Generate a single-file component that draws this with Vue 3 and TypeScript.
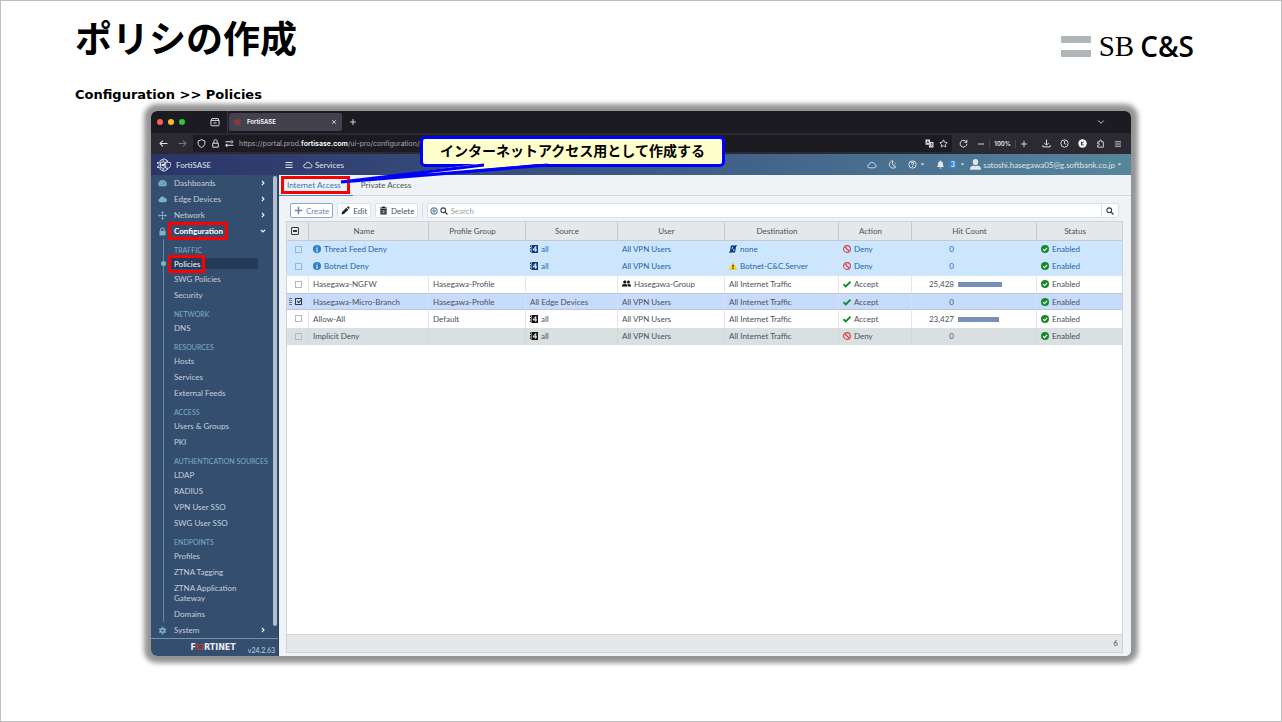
<script setup lang="ts">
import { ref } from 'vue'

const icons: Record<string, string> = {
  dash: '<path fill="currentColor" d="M8 2a7 7 0 0 0-6.300 10.600c.2.300.500.400.800.400h11c.300 0 .600-.100.800-.400A7 7 0 0 0 8 2z"/><path d="M7.800 10.500 11 5.500M3.500 9h1M5 5.500l.600.600M8 3.800v1M11.700 9h.8" stroke="#344e70" stroke-width="1.300" fill="none"/>',
  cloud: '<path fill="currentColor" d="M4 13a3.500 3.500 0 0 1-.6-6.900 4.500 4.500 0 0 1 8.500-.9A3.900 3.900 0 0 1 12 13z"/>',
  cloudLine: '<path fill="none" stroke="currentColor" stroke-width="1.400" d="M4 12.500a2.800 2.800 0 0 1-.3-5.600 4.300 4.300 0 0 1 8.300-.3A3 3 0 0 1 12 12.500z"/>',
  network: '<path fill="none" stroke="currentColor" stroke-width="1.700" d="M8 1v14M1 8h14M6 3l2-2 2 2M6 13l2 2 2-2M3 6 1 8l2 2M13 6l2 2-2 2"/>',
  lock: '<path fill="currentColor" d="M2.500 7h11v8h-11z"/><path fill="none" stroke="currentColor" stroke-width="2" d="M4.700 7V5a3.300 3.300 0 0 1 6.600 0v2"/>',
  gear: '<path fill="none" stroke="currentColor" stroke-width="3" d="M8 4.500a3.500 3.500 0 1 0 0 7 3.500 3.500 0 0 0 0-7z"/><path stroke="currentColor" stroke-width="2.600" d="M8 1v2M8 13v2M2 4.500l1.700 1M12.300 10.500l1.700 1M2 11.500l1.700-1M12.300 5.500l1.700-1"/>',
  right: '<path fill="none" stroke="currentColor" stroke-width="3" d="m5 2.500 5.500 5.500L5 13.500"/>',
  down: '<path fill="none" stroke="currentColor" stroke-width="3" d="m2.500 5 5.500 5.500L13.500 5"/>',
  chevron: '<path fill="none" stroke="currentColor" stroke-width="1.700" d="m2.500 5 5.500 5.500L13.500 5"/>',
  box: '<path fill="none" stroke="currentColor" stroke-width="1.500" d="M1.500 5.500h13v7a1.500 1.500 0 0 1-1.500 1.500H3a1.500 1.500 0 0 1-1.500-1.500zM2 5.500l1-3h10l1 3M5.500 9.500h5"/>',
  close: '<path fill="none" stroke="currentColor" stroke-width="1.800" d="m3 3 10 10M13 3 3 13"/>',
  plus: '<path fill="none" stroke="currentColor" stroke-width="1.800" d="M8 2v12M2 8h12"/>',
  plusBold: '<path fill="none" stroke="currentColor" stroke-width="2.600" d="M8 1.500v13M1.500 8h13"/>',
  minus: '<path fill="none" stroke="currentColor" stroke-width="1.800" d="M2 8h12"/>',
  back: '<path fill="none" stroke="currentColor" stroke-width="1.800" d="M15 8H2M7 2.800 1.800 8 7 13.200"/>',
  forward: '<path fill="none" stroke="currentColor" stroke-width="1.800" d="M1 8h13M9 2.800 14.200 8 9 13.200"/>',
  shield: '<path fill="none" stroke="currentColor" stroke-width="1.700" d="M8 1.200 14 3.500v4c0 3.500-2.500 6-6 7.500-3.500-1.500-6-4-6-7.500v-4z"/>',
  padlock: '<path fill="none" stroke="currentColor" stroke-width="1.700" d="M3 7.500h10v7H3zM5 7.500V4.300a3 3 0 0 1 6 0v3.200"/>',
  perms: '<path fill="none" stroke="currentColor" stroke-width="1.800" d="M1 5h8M5.500 11H15M4 8.500 1.500 11 4 13.500M1.500 11H6"/><circle cx="12" cy="5" r="2" fill="none" stroke="currentColor" stroke-width="1.500"/>',
  translate: '<path fill="currentColor" d="M1 1h8v9H1zM9 5.500h6V15H7v-4h2z"/><path d="M3 8l2-5 2 5M3.700 6.400h2.600M9.500 8.500h4M11.500 7.500v1M10 13c1.500-1 2.500-2.500 3-4.500M10.500 10.500c.6 1 1.500 2 2.800 2.500" fill="none" stroke="#1c1b22" stroke-width="1"/>',
  star: '<path fill="none" stroke="currentColor" stroke-width="1.500" d="m8 1.500 2 4.300 4.600.600-3.400 3.200.9 4.700L8 12l-4.100 2.300.9-4.700L1.400 6.400 6 5.800z"/>',
  reload: '<path fill="none" stroke="currentColor" stroke-width="1.700" d="M13.300 5.500A6 6 0 1 0 14 8.500M14 1.500v4.500H9.500"/>',
  download: '<path fill="none" stroke="currentColor" stroke-width="1.700" d="M8 1v9.500M4 7l4 4 4-4M1.500 11v3h13v-3"/>',
  clock: '<circle cx="8" cy="8" r="6.500" fill="none" stroke="currentColor" stroke-width="1.600"/><path fill="none" stroke="currentColor" stroke-width="1.600" d="M8 3.500V8l3 1.500"/>',
  account: '<circle cx="8" cy="8" r="7.500" fill="currentColor"/><path d="M6 4.500v7M10.500 4.500 6.500 8l4 3.500" stroke="#2b2a33" stroke-width="1.700" fill="none"/>',
  puzzle: '<path fill="none" stroke="currentColor" stroke-width="1.600" d="M3 14.500v-3.500h1.500a1.500 1.500 0 0 0 0-3H3V5h3.500V3.500a1.700 1.700 0 0 1 3.400 0V5H13v9.500z"/>',
  menu: '<path fill="none" stroke="currentColor" stroke-width="1.700" d="M2 3.500h12M2 8h12M2 12.500h12"/>',
  menuBold: '<path fill="none" stroke="currentColor" stroke-width="2.300" d="M1 3h14M1 8h14M1 13h14"/>',
  moon: '<path fill="none" stroke="currentColor" stroke-width="1.700" d="M9 1.500a6.500 6.500 0 1 0 5 10.500C9.500 12.800 6.500 7 9 1.500z"/><path stroke="currentColor" d="M10 8.500h3M12 5.500h2.500"/>',
  help: '<circle cx="8" cy="8" r="6.500" fill="none" stroke="currentColor" stroke-width="1.700"/><path fill="none" stroke="currentColor" stroke-width="1.800" d="M5.800 6.500c0-3 4.500-2.700 4.300-.2C10 8 8 7.800 8 9.700M8 10.700v1.500"/>',
  bell: '<path fill="currentColor" d="M8 1c.7 0 1.200.5 1.200 1.200C11.500 3 12.300 5 12.300 7c0 3 1 4 2.200 5.500h-13C2.700 11 3.700 10 3.700 7c0-2 .8-4 3.100-4.800C6.800 1.500 7.300 1 8 1zM6 13.500h4a2 2 0 0 1-4 0z"/>',
  user: '<path fill="currentColor" d="M8 0c2.600 0 4 1.700 4 4.200C12 7 10.200 9 8 9S4 7 4 4.200C4 1.700 5.400 0 8 0zM0 15.500c0-4 1.500-5.500 5-6a5 5 0 0 0 6 0c3.500.5 5 2 5 6z"/>',
  caret: '<path fill="currentColor" d="M2 5h12l-6 6.500z"/>',
  hex: '<g fill="none" stroke="currentColor" stroke-width="1"><path d="M3.500 5V3L8 .8 12 3v2M3.500 11v2L8 15.200 12 13v-2M4 5.500l3-1.500 3 1.500v5L7 12l-3-1.500zM7 4V1.500M7 12v3M10 3.500h2M10 12.500h2M0 5.500h4M0 10.500h4M1 8h6"/><path d="m12 4.500 3.500 1v3c0 1.800-1.500 2.800-3.500 3.500-2-.7-3.500-1.700-3.500-3.500v-3z"/></g><circle cx="1" cy="5.500" r="1" fill="currentColor"/><circle cx="1" cy="10.500" r="1" fill="currentColor"/><circle cx="7" cy="8" r="1.500" fill="currentColor"/>',
  pencil: '<path fill="currentColor" d="m1 15 .8-4.200L9.500 3l3.500 3.500-7.700 7.700zM10.500 2l1.300-1.300c.5-.5 1-.5 1.500 0l2 2c.5.500.5 1 0 1.500L14 5.500z"/>',
  trash: '<path fill="currentColor" d="M1.500 2.500H5L6 1h4l1 1.500h3.500v1.800h-13zM2.500 5.500h11V15h-11z"/><path stroke="#fff" stroke-width=".9" d="M5.500 7v6.500M8 7v6.500M10.500 7v6.500"/>',
  search: '<circle cx="6.500" cy="6.500" r="4.700" fill="none" stroke="currentColor" stroke-width="2.200"/><path stroke="currentColor" stroke-width="2.600" d="m10 10 5 5"/>',
  addCircle: '<circle cx="8" cy="8" r="6.300" fill="none" stroke="currentColor" stroke-width="2.600"/><path stroke="currentColor" stroke-width="2.400" d="M8 4v8M4 8h8"/>',
  info: '<circle cx="8" cy="8" r="8" fill="currentColor"/><path stroke="#cce6ff" stroke-width="2.200" d="M8 3v2.200M8 6.500V13"/><path stroke="#cce6ff" stroke-width="1.300" d="M6 7.200h2M6 12.400h4"/>',
  four: '<path fill="currentColor" d="M3 0h13v16H3zM0 1h2v3H0zM0 6h2v3H0zM0 11h2v3H0z"/><path fill="none" stroke="#fff" stroke-width="2" d="M11.500 13.500V3L6 9.800h8"/>',
  none: '<path fill="none" stroke="currentColor" stroke-width="2.600" d="M5 2.500h8l-2 11H3zM15 .5l-14 15M10.500 2 6 13.500"/>',
  warn: '<path fill="#ffe600" stroke="#d9c300" d="M8 1.500 15.500 15H.5z"/><path stroke="#222" stroke-width="2.400" d="M8 5.500V11M8 12v2"/>',
  group: '<path fill="currentColor" d="M5 2.500c1.800 0 2.800 1.100 2.800 2.800S6.500 8.200 5 8.200 2.200 7 2.200 5.300 3.200 2.500 5 2.500zM0 13.500c0-3 1.200-4.200 3.200-4.500 1.200.6 2.400.6 3.600 0 1.500.2 3 1.200 3 4.500zM11.300 2.500C13 2.500 14 3.600 14 5.300s-1.200 2.900-2.700 2.900c-.9 0-1.700-.4-2.200-1.100.5-1.200.5-2.600 0-3.700.5-.6 1.300-.9 2.200-.9zM10.800 13.500c0-2-.3-3.200-1.300-4.300 1.100.4 2.200.3 3.300-.2 2 .3 3.200 1.500 3.200 4.500z"/>',
  deny: '<circle cx="8" cy="8" r="6.800" fill="none" stroke="currentColor" stroke-width="2.200"/><path stroke="currentColor" stroke-width="2.200" d="m3.500 3.500 9 9"/>',
  accept: '<path fill="none" stroke="currentColor" stroke-width="3.600" d="m1 8.500 4.500 4.300L15 3.500"/>',
  enabled: '<circle cx="8" cy="8" r="8" fill="currentColor"/><path fill="none" stroke="#fff" stroke-width="2.200" d="m4 8.300 3 2.900 5.200-5.600"/>',
}

interface Entry { icon: string; label: string }
const topItems: Entry[] = [
  { icon: 'dash', label: 'Dashboards' },
  { icon: 'cloud', label: 'Edge Devices' },
  { icon: 'network', label: 'Network' },
]

const sections = [
  { title: 'TRAFFIC', items: ['Policies', 'SWG Policies', 'Security'] },
  { title: 'NETWORK', items: ['DNS'] },
  { title: 'RESOURCES', items: ['Hosts', 'Services', 'External Feeds'] },
  { title: 'ACCESS', items: ['Users & Groups', 'PKI'] },
  { title: 'AUTHENTICATION SOURCES', items: ['LDAP', 'RADIUS', 'VPN User SSO', 'SWG User SSO'] },
  { title: 'ENDPOINTS', items: ['Profiles', 'ZTNA Tagging', 'ZTNA Application Gateway', 'Domains'] },
]

const columns = [
  { label: 'Name', cls: 'c-name' },
  { label: 'Profile Group', cls: 'c-profile' },
  { label: 'Source', cls: 'c-source' },
  { label: 'User', cls: 'c-user' },
  { label: 'Destination', cls: 'c-dest' },
  { label: 'Action', cls: 'c-action' },
  { label: 'Hit Count', cls: 'c-hits' },
  { label: 'Status', cls: 'c-status' },
]

interface Policy {
  name: string
  kind: 'system' | 'plain' | 'selected' | 'implicit'
  profile: string
  source: string
  user: string
  destination: string
  destIcon?: string
  action: 'Deny' | 'Accept'
  hits: number
  checked: boolean
}

const policies = ref<Policy[]>([
  { name: 'Threat Feed Deny', kind: 'system', profile: '', source: 'all', user: 'All VPN Users', destination: 'none', destIcon: 'none', action: 'Deny', hits: 0, checked: false },
  { name: 'Botnet Deny', kind: 'system', profile: '', source: 'all', user: 'All VPN Users', destination: 'Botnet-C&C.Server', destIcon: 'warn', action: 'Deny', hits: 0, checked: false },
  { name: 'Hasegawa-NGFW', kind: 'plain', profile: 'Hasegawa-Profile', source: '', user: 'Hasegawa-Group', destination: 'All Internet Traffic', action: 'Accept', hits: 25428, checked: false },
  { name: 'Hasegawa-Micro-Branch', kind: 'selected', profile: 'Hasegawa-Profile', source: 'All Edge Devices', user: 'All VPN Users', destination: 'All Internet Traffic', action: 'Accept', hits: 0, checked: true },
  { name: 'Allow-All', kind: 'plain', profile: 'Default', source: 'all', user: 'All VPN Users', destination: 'All Internet Traffic', action: 'Accept', hits: 23427, checked: false },
  { name: 'Implicit Deny', kind: 'implicit', profile: '', source: 'all', user: 'All VPN Users', destination: 'All Internet Traffic', action: 'Deny', hits: 0, checked: false },
])

const query = ref('')
const barWidth = (hits: number): string => `${Math.round((hits / 25428) * 44)}px`
</script>

<template>
  <main class="slide">
    <header class="slide-head">
      <h1>ポリシの作成</h1>
      <div class="brand">
        <span class="brand-bars"><i></i><i></i></span>
        <span class="brand-sb">SB</span>
        <span class="brand-cs">C&amp;S</span>
      </div>
    </header>
    <p class="path">Configuration &gt;&gt; Policies</p>

    <section class="window">
      <div class="tabstrip">
        <span class="lights"><i class="red"></i><i class="amber"></i><i class="green"></i></span>
        <button class="bare" aria-label="Collections"><svg class="i10" viewBox="0 0 16 16" v-html="icons.box"></svg></button>
        <div class="browser-tab">
          <svg class="i8 fav" viewBox="0 0 16 16" v-html="icons.hex"></svg>
          <span>FortiSASE</span>
          <button class="bare tab-close" aria-label="Close tab"><svg class="i6" viewBox="0 0 16 16" v-html="icons.close"></svg></button>
        </div>
        <button class="bare new-tab" aria-label="New tab"><svg class="i8" viewBox="0 0 16 16" v-html="icons.plus"></svg></button>
        <button class="bare all-tabs" aria-label="List tabs"><svg class="i8" viewBox="0 0 16 16" v-html="icons.chevron"></svg></button>
      </div>

      <div class="toolbar">
        <button class="bare" aria-label="Back"><svg class="i9" viewBox="0 0 16 16" v-html="icons.back"></svg></button>
        <button class="bare dim" aria-label="Forward"><svg class="i9" viewBox="0 0 16 16" v-html="icons.forward"></svg></button>
        <div class="address">
          <svg class="i9" viewBox="0 0 16 16" v-html="icons.shield"></svg>
          <svg class="i9" viewBox="0 0 16 16" v-html="icons.padlock"></svg>
          <svg class="i9" viewBox="0 0 16 16" v-html="icons.perms"></svg>
          <span class="url">https://portal.prod.<b>fortisase.com</b>/ui-pro/configuration/policies</span>
          <svg class="i9" viewBox="0 0 16 16" v-html="icons.translate"></svg>
          <svg class="i9" viewBox="0 0 16 16" v-html="icons.star"></svg>
        </div>
        <div class="zoom">
          <button class="bare" aria-label="Reload"><svg class="i9" viewBox="0 0 16 16" v-html="icons.reload"></svg></button>
          <button class="bare zoom-out" aria-label="Zoom out"><svg class="i8" viewBox="0 0 16 16" v-html="icons.minus"></svg></button>
          <span class="percent">100%</span>
          <button class="bare" aria-label="Zoom in"><svg class="i8" viewBox="0 0 16 16" v-html="icons.plus"></svg></button>
        </div>
        <div class="tools">
          <button class="bare" aria-label="Downloads"><svg class="i9" viewBox="0 0 16 16" v-html="icons.download"></svg></button>
          <button class="bare" aria-label="History"><svg class="i9" viewBox="0 0 16 16" v-html="icons.clock"></svg></button>
          <button class="bare" aria-label="Account"><svg class="i9 white" viewBox="0 0 16 16" v-html="icons.account"></svg></button>
          <button class="bare" aria-label="Extensions"><svg class="i9" viewBox="0 0 16 16" v-html="icons.puzzle"></svg></button>
          <button class="bare" aria-label="Menu"><svg class="i8" viewBox="0 0 16 16" v-html="icons.menu"></svg></button>
        </div>
      </div>

      <div class="appbar">
        <a class="product" href="#"><svg class="i14" viewBox="0 0 16 16" v-html="icons.hex"></svg>FortiSASE</a>
        <button class="bare" aria-label="Toggle navigation"><svg class="i8" viewBox="0 0 16 16" v-html="icons.menuBold"></svg></button>
        <a class="services" href="#"><svg class="i10" viewBox="0 0 16 16" v-html="icons.cloudLine"></svg>Services</a>
        <div class="app-right">
          <button class="bare" aria-label="Cloud"><svg class="i10" viewBox="0 0 16 16" v-html="icons.cloudLine"></svg></button>
          <button class="bare" aria-label="Theme"><svg class="i9" viewBox="0 0 16 16" v-html="icons.moon"></svg></button>
          <button class="bare" aria-label="Help"><svg class="i9" viewBox="0 0 16 16" v-html="icons.help"></svg><svg class="i5" viewBox="0 0 16 16" v-html="icons.caret"></svg></button>
          <button class="bare" aria-label="Notifications"><svg class="i9" viewBox="0 0 16 16" v-html="icons.bell"></svg><span class="badge">3</span><svg class="i5" viewBox="0 0 16 16" v-html="icons.caret"></svg></button>
          <button class="bare account"><svg class="i11" viewBox="0 0 16 16" v-html="icons.user"></svg>satoshi.hasegawa05@g.softbank.co.jp<svg class="i5" viewBox="0 0 16 16" v-html="icons.caret"></svg></button>
        </div>
      </div>

      <div class="app">
        <aside class="sidebar">
          <nav class="nav">
            <a v-for="item in topItems" :key="item.label" class="entry" href="#">
              <svg class="i9 tint" viewBox="0 0 16 16" v-html="icons[item.icon]"></svg>{{ item.label }}
              <svg class="i6 arrow" viewBox="0 0 16 16" v-html="icons.right"></svg>
            </a>
            <a class="entry open" href="#">
              <svg class="i9 tint" viewBox="0 0 16 16" v-html="icons.lock"></svg><span class="mark">Configuration</span>
              <svg class="i6 arrow" viewBox="0 0 16 16" v-html="icons.down"></svg>
            </a>
            <div class="branch">
              <template v-for="section in sections" :key="section.title">
                <h2>{{ section.title }}</h2>
                <a v-for="label in section.items" :key="label" href="#" class="leaf" :class="{ current: label === 'Policies' }">
                  <span :class="{ mark: label === 'Policies' }">{{ label }}</span>
                </a>
              </template>
            </div>
            <a class="entry" href="#">
              <svg class="i9 tint" viewBox="0 0 16 16" v-html="icons.gear"></svg>System
              <svg class="i6 arrow" viewBox="0 0 16 16" v-html="icons.right"></svg>
            </a>
            <i class="thumb"></i>
          </nav>
          <footer class="side-foot">
            <span class="vendor">F<svg class="vendor-o" viewBox="0 0 14 12"><path fill="#d9352c" d="M1 0h3v3H0V1zM5.500 0h3v3h-3zM10 0h3l1 1v2h-4zM0 4.500h4v3H0zM10 4.500h4v3h-4zM0 9h4v3H1l-1-1zM5.500 9h3v3h-3zM10 9h4v2l-1 1h-3z" /></svg>RTINET</span>
            <span class="version">v24.2.63</span>
          </footer>
        </aside>

        <section class="content">
          <div class="tabs" role="tablist">
            <button role="tab" class="tab active" aria-selected="true"><span class="mark">Internet Access</span></button>
            <button role="tab" class="tab" aria-selected="false">Private Access</button>
          </div>

          <div class="actions">
            <button class="act create"><svg class="i9" viewBox="0 0 16 16" v-html="icons.plusBold"></svg>Create</button>
            <button class="act"><svg class="i9" viewBox="0 0 16 16" v-html="icons.pencil"></svg>Edit</button>
            <button class="act"><svg class="i9" viewBox="0 0 16 16" v-html="icons.trash"></svg>Delete</button>
            <label class="search">
              <svg class="i8 add" viewBox="0 0 16 16" v-html="icons.addCircle"></svg>
              <svg class="i8" viewBox="0 0 16 16" v-html="icons.search"></svg>
              <input v-model="query" type="text" placeholder="Search" aria-label="Search" />
              <button class="go" aria-label="Run search"><svg class="i8" viewBox="0 0 16 16" v-html="icons.search"></svg></button>
            </label>
          </div>

          <div class="grid">
            <table>
              <colgroup>
                <col class="c-check" />
                <col v-for="c in columns" :key="c.label" :class="c.cls" />
              </colgroup>
              <thead>
                <tr>
                  <th class="check-cell"><input type="checkbox" class="tick some" aria-label="Select all" /></th>
                  <th v-for="c in columns" :key="c.label" scope="col">{{ c.label }}</th>
                </tr>
              </thead>
              <tbody>
                <tr v-for="p in policies" :key="p.name" :class="p.kind">
                  <td class="check-cell">
                    <i v-if="p.kind === 'selected'" class="grip"></i>
                    <input v-model="p.checked" type="checkbox" class="tick" :aria-label="p.name" />
                  </td>
                  <td><svg v-if="p.kind === 'system'" class="i8 info" viewBox="0 0 16 16" v-html="icons.info"></svg>{{ p.name }}</td>
                  <td>{{ p.profile }}</td>
                  <td><svg v-if="p.source === 'all'" class="i8 dark" viewBox="0 0 16 16" v-html="icons.four"></svg>{{ p.source }}</td>
                  <td><svg v-if="p.user === 'Hasegawa-Group'" class="i9 dark" viewBox="0 0 16 16" v-html="icons.group"></svg>{{ p.user }}</td>
                  <td><svg v-if="p.destIcon" class="i8 dark" viewBox="0 0 16 16" v-html="icons[p.destIcon]"></svg>{{ p.destination }}</td>
                  <td><svg class="i8" :class="p.action.toLowerCase()" viewBox="0 0 16 16" v-html="icons[p.action.toLowerCase()]"></svg>{{ p.action }}</td>
                  <td><span class="hits">{{ p.hits.toLocaleString('en-US') }}</span><i v-if="p.hits" class="bar" :style="{ width: barWidth(p.hits) }"></i></td>
                  <td><svg class="i8 accept" viewBox="0 0 16 16" v-html="icons.enabled"></svg>Enabled</td>
                </tr>
              </tbody>
            </table>
            <footer class="count">{{ policies.length }}</footer>
          </div>
        </section>
      </div>

      <div class="callout">
        インターネットアクセス用として作成する
        <svg class="tail" viewBox="0 0 220 24">
          <path class="tail-fill" d="M146 0 3 19 210 0z" />
          <path class="tail-line" d="M146 2 3 19 210 2" />
        </svg>
      </div>
    </section>
  </main>
</template>

<style>
body {
  margin: 0;
  background: #fff;
}
</style>

<style scoped>
* {
  box-sizing: border-box;
}
.slide {
  display: flex;
  flex-direction: column;
  min-height: 100vh;
  padding: 0 150px 65px;
  border: 1px solid #bfbfbf;
  background: #fff;
  font-family: Lato, "Noto Sans CJK JP", sans-serif;
  font-size: 8px;
}
.slide-head {
  display: flex;
  justify-content: space-between;
  height: 76px;
  margin: 0 -63px 0 -76px;
}
h1 {
  margin: 8px 0 0;
  color: #000;
  font: 700 37px/56px "Noto Sans CJK JP", sans-serif;
}
.brand {
  display: flex;
  align-items: center;
  height: 40px;
  margin-top: 25px;
  color: #000;
}
.brand-bars {
  display: grid;
  gap: 7px;
  width: 30px;
  margin-right: 8px;
}
.brand-bars i {
  height: 7px;
  background: #b1b6b9;
}
.brand-sb {
  margin-right: 6px;
  font: 29px/40px "Liberation Serif", serif;
}
.brand-cs {
  font: 600 28px/40px "Open Sans", sans-serif;
}
.path {
  margin: 8px 0 6px -76px;
  color: #000;
  font: 700 13px/20px "DejaVu Sans", "Noto Sans", sans-serif;
}

svg {
  flex: none;
  display: block;
}
.i5 { width: 5px; height: 5px; }
.i6 { width: 6px; height: 6px; }
.i8 { width: 8px; height: 8px; }
.i9 { width: 9px; height: 9px; }
.i10 { width: 10px; height: 10px; }
.i11 { width: 11px; height: 11px; }
.i14 { width: 14px; height: 14px; }
.white { color: #fff; }
button,
input {
  margin: 0;
  padding: 0;
  font: inherit;
  color: inherit;
}
a {
  color: inherit;
  text-decoration: none;
}
.bare {
  display: flex;
  align-items: center;
  border: 0;
  background: none;
}

.window {
  position: relative;
  flex: 1;
  display: flex;
  flex-direction: column;
  border-radius: 6px;
  box-shadow: 0 0 5px 7px rgba(0, 0, 0, 0.42);
}
.tabstrip {
  display: flex;
  align-items: center;
  height: 22px;
  padding: 0 26px 0 6px;
  border-radius: 6px 6px 0 0;
  background: #1c1b22;
  color: #e4e4e8;
}
.lights {
  display: flex;
  gap: 5px;
  margin-right: 25px;
}
.lights i {
  width: 6px;
  height: 6px;
  border-radius: 50%;
}
.red { background: #ff5f57; }
.amber { background: #febc2e; }
.green { background: #28c840; }
.lights + .bare {
  height: 22px;
  padding-right: 7px;
  border-right: 1px solid #3a3944;
}
.browser-tab {
  display: flex;
  align-items: center;
  gap: 5px;
  width: 113px;
  height: 18px;
  margin-left: 1px;
  padding: 0 5px;
  border-radius: 2px;
  background: #42414d;
  color: #fff;
  font: 600 6px/8px Inter, sans-serif;
}
.fav { color: #c03a3c; }
.tab-close { margin-left: auto; }
.new-tab { margin-left: 7px; }
.all-tabs { margin-left: auto; }
.toolbar {
  display: flex;
  align-items: center;
  height: 21px;
  padding: 0 9px 0 8px;
  gap: 10px;
  background: #2b2a33;
  color: #e4e4e8;
}
.dim { color: #77767f; }
.address {
  flex: 1;
  display: flex;
  align-items: center;
  gap: 5px;
  height: 17px;
  margin-left: -4px;
  padding: 0 4px;
  border-radius: 2px;
  background: #1c1b22;
}
.url {
  flex: 1;
  color: #a5a5ad;
  font: 7px/10px Inter, sans-serif;
}
.url b {
  color: #fff;
  font-weight: 600;
}
.zoom {
  display: flex;
  align-items: center;
  justify-content: space-between;
  width: 69px;
  margin-left: -3px;
}
.zoom-out { margin-left: 5px; }
.percent {
  font: 600 6px/8px Inter, sans-serif;
  padding: 0 4px;
  border: solid #4a4953;
  border-width: 0 1px;
}
.tools {
  display: flex;
  gap: 9px;
  margin-left: 4px;
}

.appbar {
  display: flex;
  align-items: center;
  height: 21px;
  padding: 0 9px 0 6px;
  background: linear-gradient(90deg, #2b3467, #3c5984 50%, #57869b);
  color: #dfe6ee;
  line-height: 10px;
}
.product {
  display: flex;
  align-items: center;
  gap: 5px;
  width: 128px;
}
.services {
  display: flex;
  align-items: center;
  gap: 2px;
  margin-left: 10px;
}
.app-right {
  display: flex;
  align-items: center;
  gap: 11px;
  margin-left: auto;
}
.app-right .bare { gap: 3px; }
.app-right .account {
  gap: 2px;
  margin-left: -6px;
}
.badge {
  width: 9px;
  height: 9px;
  border-radius: 50%;
  background: #3b82cc;
  color: #fff;
  font-size: 7px;
  line-height: 9px;
  text-align: center;
}

.app {
  flex: 1;
  display: flex;
}
.sidebar {
  display: flex;
  flex-direction: column;
  width: 128px;
  border-right: 1px solid #1f4468;
  border-radius: 0 0 0 6px;
  background: #344e70;
  color: #c6cfd9;
}
.nav {
  position: relative;
  flex: 1;
  display: flex;
  flex-direction: column;
}
.entry {
  flex: 1 0 auto;
  display: flex;
  align-items: center;
  height: 15px;
  gap: 7px;
  padding: 0 12px 0 7px;
  line-height: 10px;
}
.open {
  color: #fff;
  font-weight: 700;
}
.tint { color: #7fb0c4; }
.arrow {
  margin-left: auto;
  color: #fff;
}
.branch {
  position: relative;
  flex: 23 0 auto;
  display: flex;
  flex-direction: column;
}
.branch::before {
  content: "";
  position: absolute;
  inset: 0 auto 0 12px;
  width: 1px;
  background: #5f8ba3;
}
.branch h2 {
  flex: 1 0 auto;
  display: flex;
  align-items: center;
  margin: 0 0 0 23px;
  padding: 5px 0 1px;
  color: #79b0c5;
  font-size: 7px;
  font-weight: 400;
  line-height: 10px;
}
.leaf {
  position: relative;
  flex: 1 0 auto;
  display: flex;
  align-items: center;
  margin: 0 20px 0 19px;
  padding: 2px 12px 3px 4px;
  line-height: 10px;
}
.current {
  color: #fff;
  background: #243a57 content-box;
  padding: 2px 0;
}
.current span { margin-left: 4px; }
.current::before {
  content: "";
  position: absolute;
  top: 5px;
  left: -9px;
  width: 5px;
  height: 5px;
  border-radius: 50%;
  background: #7fb0c4;
}
.mark { position: relative; }
.mark::after {
  content: "";
  position: absolute;
  inset: -4px -5px -4px -6px;
  border: 3px solid #f00;
}
.thumb {
  position: absolute;
  top: 1px;
  right: 1px;
  bottom: 12px;
  width: 4px;
  border-radius: 2px;
  background: #b4bfd0;
}
.side-foot {
  display: flex;
  justify-content: flex-end;
  gap: 12px;
  height: 18px;
  padding-right: 3px;
  border-top: 1px solid #7593a9;
}
.vendor {
  display: flex;
  align-items: center;
  color: #e8ecf0;
  font: 700 8px/16px "DejaVu Sans", sans-serif;
}
.vendor-o {
  width: 8px;
  height: 6px;
  margin-bottom: 2px;
}
.version {
  padding-top: 6px;
  font-size: 7px;
  line-height: 11px;
}

.content {
  flex: 1;
  display: flex;
  flex-direction: column;
  min-width: 0;
  border-radius: 0 0 6px 0;
  background: #eff3f6;
  color: #4b5258;
}
.tabs {
  display: flex;
  height: 21px;
  border-bottom: 1px solid #d3d9de;
}
.tab {
  display: flex;
  align-items: center;
  margin-bottom: -1px;
  padding: 0 12px 0 8px;
  border: 0;
  border-bottom: 1px solid transparent;
  background: none;
  line-height: 10px;
}
.active {
  border-color: #4a8fd0;
  color: #2f78bd;
}
.active .mark::after { inset: -4px -9px -4px -6px; }
.actions {
  display: flex;
  gap: 4px;
  margin: 7px 4px 3px 11px;
}
.act {
  display: flex;
  align-items: center;
  gap: 3px;
  height: 15px;
  padding: 0 3px;
  border: 1px solid #dde1e4;
  border-radius: 2px;
  background: #fff;
  line-height: 10px;
}
.act svg { color: #222; }
.create,
.create svg {
  border-color: #8fa6cc;
  color: #6b86b6;
}
.search {
  position: relative;
  flex: 1;
  display: flex;
  align-items: center;
  gap: 2px;
  height: 15px;
  margin: 0 8px 0 5px;
  padding-left: 2px;
  border: 1px solid #dadfe3;
  border-radius: 2px;
  background: #fff;
}
.search::before {
  content: "";
  position: absolute;
  left: -6px;
  width: 1px;
  height: 15px;
  background: #d5dade;
}
.search svg { color: #3a4046; }
.search .add { color: #6b86b6; }
.search input {
  flex: 1;
  min-width: 0;
  border: 0;
  outline: 0;
  background: none;
  line-height: 10px;
}
.search input::placeholder { color: #9a9fa3; }
.go {
  display: grid;
  place-items: center;
  width: 17px;
  height: 13px;
  border: 0;
  border-left: 1px solid #dadfe3;
  background: none;
}

.grid {
  flex: 1;
  display: flex;
  flex-direction: column;
  margin: 0 8px 3px 7px;
  border: 1px solid #cfd4d8;
  background: #fff;
}
table {
  width: 100%;
  height: 123px;
  border-collapse: separate;
  border-spacing: 0;
  table-layout: fixed;
  line-height: 10px;
}
.c-check { width: 22px; }
.c-name { width: 120px; }
.c-profile { width: 97px; }
.c-source { width: 92px; }
.c-user { width: 107px; }
.c-dest { width: 114px; }
.c-action { width: 73px; }
.c-hits { width: 125px; }
.c-status { width: 85px; }
th {
  height: 19px;
  padding: 0 9px 0 0;
  border-right: 1px solid #c5cace;
  border-bottom: 1px solid #c5cace;
  background: #e4e8eb;
  font-weight: 400;
}
td {
  height: 17px;
  padding: 0 0 0 4px;
  border-right: 1px solid #e2e5e8;
  white-space: nowrap;
}
td svg {
  display: inline-block;
  margin-right: 3px;
  vertical-align: -1px;
}
th:last-child,
td:last-child { border-right: 0; }
.check-cell {
  position: relative;
  padding: 0 0 0 8px;
  text-align: left;
}
th.check-cell { padding-left: 4px; }
.system {
  background: #cce6ff;
  color: #2563ae;
}
.system td {
  border-color: #d5e4f1;
  border-bottom: 1px solid #d5e4f1;
}
.selected { background: #c7dbfd; }
.selected td {
  border-color: #d3dff3;
  border-top: 1px solid #bcc5d3;
  border-bottom: 1px solid #bcc5d3;
}
.implicit { background: #dadfe2; }
.implicit td { border-color: #d2d7da; }
.dark { color: #111; }
.system .dark { color: #0b3a82; }
.info { color: #2f7fc6; }
.deny { color: #d8403a; }
.accept { color: #138a25; }
.tick {
  appearance: none;
  display: block;
  position: relative;
  width: 7px;
  height: 7px;
  border: 1px solid #b4b9bd;
}
.system .tick { border-color: #93b6dc; }
.tick.some,
.tick:checked { border-color: #33383c; }
.tick.some {
  width: 8px;
  height: 8px;
  border-radius: 1px;
}
.tick.some::after {
  content: "";
  position: absolute;
  inset: 2px 1px auto;
  height: 2px;
  background: #33383c;
}
.tick:not(.some):checked::after {
  content: "";
  position: absolute;
  top: 0;
  left: 1px;
  width: 4px;
  height: 2px;
  border: solid #33383c;
  border-width: 0 0 1px 1px;
  transform: rotate(-45deg);
}
.grip {
  position: absolute;
  top: 4px;
  left: 2px;
  width: 3px;
  height: 8px;
  background: repeating-linear-gradient(#70757c 0 1px, transparent 1px 2px);
}
.hits {
  display: inline-block;
  width: 38px;
  margin-right: 4px;
  text-align: right;
}
.bar {
  display: inline-block;
  height: 5px;
  background: #7890b8;
}
.count {
  height: 18px;
  margin-top: auto;
  padding-right: 4px;
  border-top: 1px solid #cfd4d8;
  background: #e4e8eb;
  line-height: 17px;
  text-align: right;
}

.callout {
  position: absolute;
  top: 25px;
  left: 269px;
  width: 305px;
  height: 31px;
  border: 3px solid #00f;
  border-radius: 5px;
  background: #ffc;
  color: #000;
  font: 700 14px/22px "Noto Sans CJK JP", sans-serif;
  text-align: center;
}
.tail {
  position: absolute;
  top: 24px;
  left: -85px;
  width: 220px;
  height: 24px;
}
.tail-fill { fill: #ffc; }
.tail-line {
  fill: none;
  stroke: #00f;
  stroke-width: 3;
}
</style>
